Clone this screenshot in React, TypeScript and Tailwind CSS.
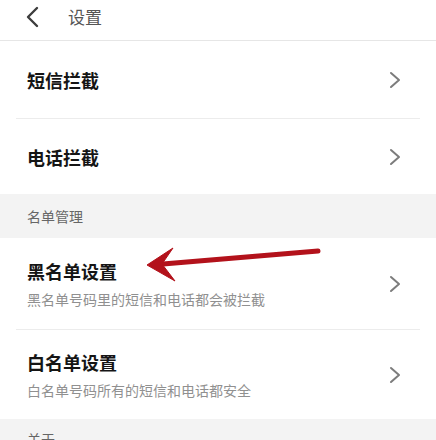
import React from "react";

const font = { fontFamily: '"Noto Sans CJK SC", "Noto Sans", sans-serif' };

function Chevron() {
  return (
    <svg width="12" height="18" viewBox="0 0 12 18" className="shrink-0" aria-hidden="true">
      <polyline points="2,2 10,9 2,16" fill="none" stroke="#7c7c7c" strokeWidth="2" strokeLinecap="round" strokeLinejoin="round" />
    </svg>
  );
}

function Row({ title, sub, h }: { title: string; sub?: string; h: string }) {
  return (
    <div className={`flex items-center justify-between pl-[27px] pr-[35px] ${h}`}>
      <div className="flex flex-col">
        <span className="text-[18px] leading-[24px] font-semibold text-[#151515]">{title}</span>
        {sub && <span className="mt-[6px] text-[14px] leading-[20px] text-[#909090]">{sub}</span>}
      </div>
      <Chevron />
    </div>
  );
}

export default function App() {
  return (
    <div className="relative h-[440px] w-[436px] overflow-hidden bg-white" style={font}>
      <div className="flex h-[41px] items-center gap-[28px] border-b border-[#e6e6e6] pl-[25px]">
        <svg width="15" height="22" viewBox="0 0 15 22" aria-hidden="true" className="-mt-[6px]">
          <polyline points="12,2 3,11 12,20" fill="none" stroke="#3d3d3d" strokeWidth="2.4" strokeLinecap="round" strokeLinejoin="round" />
        </svg>
        <span className="-mt-[6px] text-[17px] text-[#555]">设置</span>
      </div>

      <Row title="短信拦截" h="h-[77px]" />
      <div className="mx-[16px] h-px bg-[#ececec]" />
      <Row title="电话拦截" h="h-[75px]" />

      <div className="flex h-[44px] items-center bg-[#f3f3f3] pl-[27px] text-[14px] text-[#666]">名单管理</div>

      <Row title="黑名单设置" sub="黑名单号码里的短信和电话都会被拦截" h="h-[91px]" />
      <div className="mx-[16px] h-px bg-[#ececec]" />
      <Row title="白名单设置" sub="白名单号码所有的短信和电话都安全" h="h-[89px]" />

      <div className="h-[44px] bg-[#f3f3f3] pl-[27px] pt-[10px] text-[14px] leading-[20px] text-[#666]">关于</div>

      <svg className="absolute left-0 top-0" width="436" height="440" aria-hidden="true">
        <line x1="318" y1="251" x2="163" y2="264" stroke="#b3121b" strokeWidth="5" strokeLinecap="round" />
        <polygon points="147,265 173,248 162,264 175,281" fill="#b3121b" stroke="#b3121b" strokeWidth="1" strokeLinejoin="round" />
      </svg>
    </div>
  );
}
